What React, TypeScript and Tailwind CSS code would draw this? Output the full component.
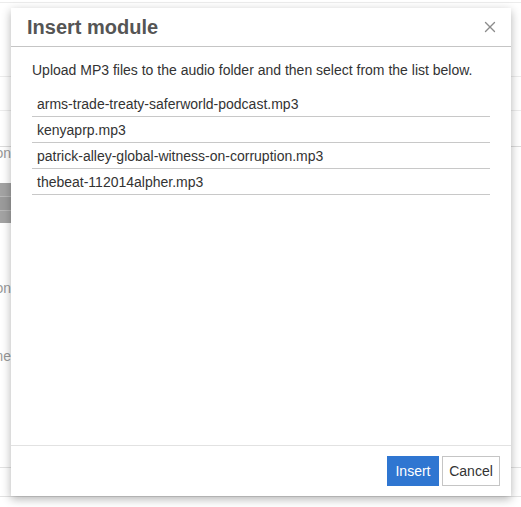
import { X } from 'lucide-react'

const files = [
  'arms-trade-treaty-saferworld-podcast.mp3',
  'kenyaprp.mp3',
  'patrick-alley-global-witness-on-corruption.mp3',
  'thebeat-112014alpher.mp3',
]

function BackgroundPage() {
  return (
    <div className="h-[507px] overflow-hidden bg-white text-sm text-[#999]">
      <div className="h-[2px]" />
      <div className="h-[74px] border-t border-[#ececec]" />
      <div className="h-[34px] border-t border-[#ececec]" />
      <div className="h-[36px] border-t border-[#ececec]" />
      <div className="h-[37px] border-t border-[#dcdcdc]">
        <div className="-mt-[4px] flex w-[11px] justify-end overflow-hidden whitespace-nowrap">Common</div>
      </div>
      <div className="w-[11px]">
        <div className="h-[13px] bg-[#a3a3a3]" />
        <div className="h-[14px] border-t border-[#b8b8b8] bg-[#9b9b9b]" />
        <div className="h-[13px] border-t border-[#b8b8b8] bg-[#a3a3a3]" />
      </div>
      <div className="h-[55px]" />
      <div className="flex h-[68px] w-[11px] justify-end overflow-hidden whitespace-nowrap">Option</div>
      <div className="flex h-[121px] w-[11px] justify-end overflow-hidden whitespace-nowrap">Name</div>
      <div className="h-[29px] border-t border-[#e2e2e2]" />
      <div className="border-t border-[#e2e2e2]" />
    </div>
  )
}

export default function App() {
  return (
    <div className="relative h-[507px] w-[521px] overflow-hidden bg-white" style={{ fontFamily: '"Liberation Sans", Arial, sans-serif' }}>
      <BackgroundPage />

      <div className="absolute left-[11px] top-[8px] flex h-[488px] w-[500px] flex-col bg-white shadow-[0_3px_9px_rgba(0,0,0,0.3)]">
        <div className="flex h-[39px] shrink-0 items-center justify-between border-b border-[#c5c5c5] pl-4 pr-[12px]">
          <h1 className="text-[20px] font-bold text-[#555]">Insert module</h1>
          <button type="button" className="text-[#8c8c8c]">
            <X size={18} strokeWidth={1.8} />
          </button>
        </div>

        <div className="flex-1 px-[21px] pt-[13px]">
          <p className="text-[14px] leading-5 text-[#333]">
            Upload MP3 files to the audio folder and then select from the list below.
          </p>
          <ul className="mt-[11px]">
            {files.map((file) => (
              <li key={file} className="flex h-[26px] items-center border-b border-[#c8c8c8] pl-[5px] pt-[1px] text-[14px] text-[#333]">
                {file}
              </li>
            ))}
          </ul>
        </div>

        <div className="flex h-[51px] shrink-0 items-center justify-end gap-[3px] border-t border-[#e2e2e2] pr-[11px]">
          <button type="button" className="h-[30px] w-[52px] bg-[#2f76d1] text-[14px] text-white">
            Insert
          </button>
          <button type="button" className="h-[30px] w-[58px] border border-[#c5c5c5] bg-white text-[14px] text-[#333]">
            Cancel
          </button>
        </div>
      </div>
    </div>
  )
}
